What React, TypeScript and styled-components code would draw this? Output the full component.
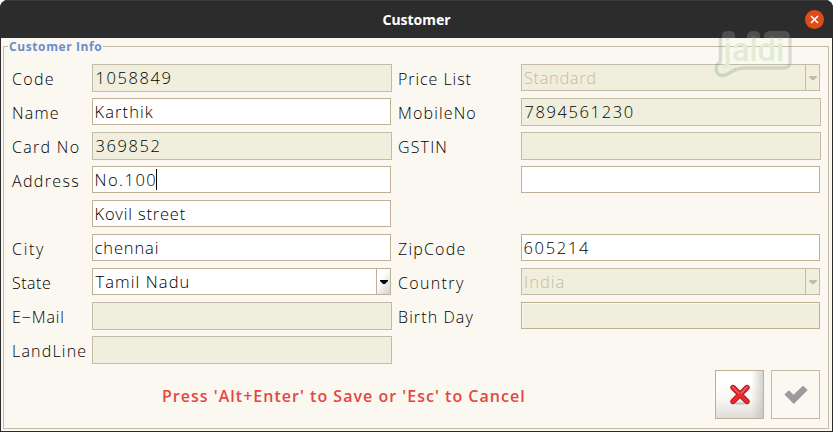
import React from "react";
import styled, { createGlobalStyle } from "styled-components";

const GlobalStyle = createGlobalStyle`
  html, body { margin: 0; background: #fff; }
  body { font-family: "Open Sans", "Noto Sans", sans-serif; color: #000; }
  * { box-sizing: border-box; }
`;

const Window = styled.div`
  position: relative;
  width: 833px;
  height: 432px;
  display: flex;
  flex-direction: column;
  padding: 0 1px 1px;
  background: #2c2c2c;
  border-radius: 8px 8px 0 0;
  overflow: hidden;
`;

const TitleBar = styled.header`
  flex: 0 0 38px;
  display: grid;
  grid-template-columns: 30px 1fr 30px;
  align-items: center;
  margin: 0 -1px;
  border-top: 1px solid #3b3b3b;
  background: #2c2c2c;
`;

const Title = styled.h1`
  grid-column: 2;
  margin: 1px 0 0;
  text-align: center;
  font: 700 14px/20px "Noto Sans", sans-serif;
  color: #fff;
`;

const CloseButton = styled.button`
  width: 19px;
  height: 19px;
  margin: -1px 0 0 2px;
  padding: 0;
  border: 0;
  border-radius: 50%;
  background: #e04c18;
  display: grid;
  place-items: center;
`;

const Body = styled.main`
  flex: 1;
  padding: 2px 3px 2px 2px;
  background: #fbf8f1;
`;

const Group = styled.fieldset`
  height: 389px;
  margin: 0;
  padding: 11px 8px 0 8px;
  border: 1px solid #c4bba6;
  min-width: 0;
`;

const Legend = styled.legend`
  height: 13px;
  margin-left: -4px;
  padding: 0 1px;
  font: 700 12px/13px "Open Sans", sans-serif;
  letter-spacing: 0.6px;
  color: #6c8dc5;
`;

const Form = styled.form`
  display: grid;
  grid-template-columns: 80px 306px 123px 300px;
  grid-auto-rows: 34px;
`;

const Label = styled.label<{ $track: number }>`
  padding-top: 4px;
  font-size: 16px;
  line-height: 22px;
  font-weight: 300;
  white-space: nowrap;
  letter-spacing: ${(p) => p.$track}px;
`;

type Kind = "locked" | "edit" | "soft";

const Box = styled.div<{ $kind: Kind; $track: number; $dim?: boolean }>`
  display: flex;
  width: ${(p) => (p.$kind === "locked" ? 300 : 299)}px;
  height: ${(p) => (p.$kind === "locked" ? 28 : 27)}px;
  border: 1px solid ${(p) => (p.$kind === "locked" || p.$dim ? "#c4bba6" : "#bdb095")};
  background: ${(p) => (p.$kind === "edit" ? "#fff" : "#f0eedd")};
  box-shadow: ${(p) => (p.$kind === "soft" && !p.$dim ? "inset 1px 1px #fbf8f1" : "none")};
  color: ${(p) => (p.$dim ? "#c4bba6" : "#000")};
  font-size: 16.5px;
  line-height: 25px;
  font-weight: 300;
  white-space: nowrap;
  letter-spacing: ${(p) => p.$track}px;
`;

const Value = styled.span<{ $inset: number }>`
  flex: 1;
  display: flex;
  height: 25px;
  padding-left: ${(p) => p.$inset}px;
`;

const TextCursor = styled.i`
  width: 1px;
  height: 21px;
  margin: 2px 0 0 -1px;
  background: #000;
`;

const Arrow = styled.span<{ $dim?: boolean }>`
  width: 14px;
  display: grid;
  place-items: center;
  border-left: 1px solid ${(p) => (p.$dim ? "#c4bba6" : "#bdb095")};
  background: ${(p) => (p.$dim ? "transparent" : "linear-gradient(125deg, #fff 35%, #d2d2d2)")};
`;

const Footer = styled.footer`
  display: grid;
  grid-template-columns: 703px 56px 49px;
  align-items: center;
`;

const Hint = styled.p`
  margin: 2px 0 0 150px;
  font: 600 16px/22px "Open Sans", sans-serif;
  letter-spacing: 1.02px;
  white-space: nowrap;
  color: #e3473f;
`;

const IconButton = styled.button<{ $active?: boolean }>`
  width: 49px;
  height: 49px;
  padding: 0;
  display: grid;
  place-items: center;
  border: 1px solid ${(p) => (p.$active ? "#bdb095" : "#c4bba6")};
  background: ${(p) =>
    p.$active
      ? "linear-gradient(90deg, transparent 75%, rgba(190,186,180,.65)), linear-gradient(180deg, #fff 20%, #f8f7f3 60%, #dfddd9)"
      : "transparent"};
`;

const Watermark = styled.svg`
  position: absolute;
  left: 710px;
  top: 26px;
  pointer-events: none;
  text {
    font: 500 33px Roboto, sans-serif;
  }
`;

const Triangle = ({ dim }: { dim?: boolean }) => (
  <Arrow $dim={dim}>
    <svg width="8" height="4" viewBox="0 0 8 4">
      <path d="M0 0h8v1L5 4H3L0 1z" fill={dim ? "#c4bba6" : "#000"} />
    </svg>
  </Arrow>
);

interface Item {
  label?: string;
  labelTrack?: number;
  value?: string;
  track?: number;
  kind?: Kind;
  combo?: boolean;
  dim?: boolean;
  cursor?: boolean;
}

const items: Item[] = [
  { label: "Code", labelTrack: 1.3, value: "1058849", track: 1.6, kind: "locked" },
  { label: "Price List", labelTrack: 0.95, value: "Standard", track: 0.6, kind: "soft", combo: true, dim: true },
  { label: "Name", labelTrack: 1.2, value: "Karthik", track: 1.1, kind: "edit" },
  { label: "MobileNo", labelTrack: 1.15, value: "7894561230", track: 1.6, kind: "locked" },
  { label: "Card No", labelTrack: 1.3, value: "369852", track: 1.6, kind: "locked" },
  { label: "GSTIN", labelTrack: 1.15, kind: "locked" },
  { label: "Address", labelTrack: 1.35, value: "No.100", track: 1.5, kind: "edit", cursor: true },
  { kind: "edit" },
  { value: "Kovil street", track: 0.8, kind: "edit" },
  {},
  { label: "City", labelTrack: 1.7, value: "chennai", track: 0.9, kind: "edit" },
  { label: "ZipCode", labelTrack: 1.2, value: "605214", track: 1.7, kind: "edit" },
  { label: "State", labelTrack: 0.5, value: "Tamil Nadu", track: 1.1, kind: "edit", combo: true },
  { label: "Country", labelTrack: 1.35, value: "India", track: 1, kind: "soft", combo: true, dim: true },
  { label: "E−Mail", labelTrack: 0.9, kind: "locked" },
  { label: "Birth Day", labelTrack: 1.1, kind: "soft" },
  { label: "LandLine", labelTrack: 1.2, kind: "locked" },
  {},
];

const Field = ({ item }: { item: Item }) => (
  <div>
    {item.kind && (
      <Box $kind={item.kind} $track={item.track ?? 1} $dim={item.dim}>
        <Value $inset={item.dim ? 2 : item.kind === "locked" || item.combo ? 2.5 : 1.5}>
          {item.value}
          {item.cursor && <TextCursor />}
        </Value>
        {item.combo && <Triangle dim={item.dim} />}
      </Box>
    )}
  </div>
);

const CancelIcon = () => (
  <svg width="24" height="24" viewBox="0 0 24 24">
    <ellipse cx="12" cy="20.5" rx="5" ry="1.2" fill="#c4c2bf" />
    <path d="M5 4.500l14 14M19 4.500L5 18.500" stroke="#a91c22" strokeWidth="5.4" strokeLinecap="round" />
    <path d="M5 4.500l14 14M19 4.500L5 18.500" stroke="#e9292d" strokeWidth="3.6" strokeLinecap="round" />
    <path d="M4.500 4l6 6M19 4l-6 6" stroke="#f05c60" strokeWidth="1.600" strokeLinecap="round" />
  </svg>
);

const CheckIcon = () => (
  <svg width="24" height="20" viewBox="0 0 24 20">
    <path d="M0.5 9.5L4.8 5.2 9.5 9.8 19 0.8 23.7 5 9.8 19z" fill="#9b9b9b" />
  </svg>
);

export default function App() {
  return (
    <>
      <GlobalStyle />
      <Window>
        <TitleBar>
          <Title>Customer</Title>
          <CloseButton aria-label="Close">
            <svg width="9" height="9" viewBox="0 0 9 9">
              <path d="M1 1l7 7M8 1L1 8" stroke="#fff" strokeWidth="1.6" />
            </svg>
          </CloseButton>
        </TitleBar>
        <Body>
          <Group>
            <Legend>Customer Info</Legend>
            <Form>
              {items.map((item, i) => (
                <React.Fragment key={i}>
                  <Label $track={item.labelTrack ?? 1}>{item.label}</Label>
                  <Field item={item} />
                </React.Fragment>
              ))}
            </Form>
            <Footer>
              <Hint>Press 'Alt+Enter' to Save or 'Esc' to Cancel</Hint>
              <IconButton $active aria-label="Cancel"><CancelIcon /></IconButton>
              <IconButton aria-label="Save"><CheckIcon /></IconButton>
            </Footer>
          </Group>
        </Body>
        <Watermark width="84" height="54" viewBox="0 0 84 54">
          <defs>
            <linearGradient id="ink" gradientUnits="userSpaceOnUse" x1="0" y1="0" x2="0" y2="50">
              <stop offset="0.24" stopColor="#5c615a" />
              <stop offset="0.24" stopColor="#e0edd2" />
            </linearGradient>
          </defs>
          <path
            d="M10.5 12V36Q5 39 6.500 45Q9 52 18 48Q26 42 35 42H74Q80 42 80 36V12"
            fill="none" stroke="#7b9f82" strokeOpacity="0.3" strokeWidth="3.4" strokeLinejoin="round"
          />
          <path d="M12 12V9Q12 5 18.500 5T25 9V12H37V9Q38 5 44 5T50 9V12H54V9Q55 5 61 5H75Q80 5 80 12z" fill="#8a8a8a" fillOpacity="0.38" />
          <text x="13.5" y="35" fill="url(#ink)" textLength="61">jaldi</text>
        </Watermark>
      </Window>
    </>
  );
}
